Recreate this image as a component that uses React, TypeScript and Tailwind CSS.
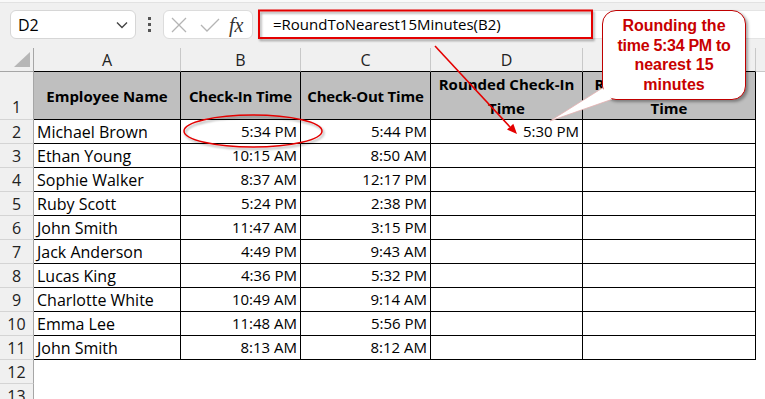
import React from "react";

const rows = [
  ["Michael Brown", "5:34 PM", "5:44 PM", "5:30 PM"],
  ["Ethan Young", "10:15 AM", "8:50 AM", ""],
  ["Sophie Walker", "8:37 AM", "12:17 PM", ""],
  ["Ruby Scott", "5:24 PM", "2:38 PM", ""],
  ["John Smith", "11:47 AM", "3:15 PM", ""],
  ["Jack Anderson", "4:49 PM", "9:43 AM", ""],
  ["Lucas King", "4:36 PM", "5:32 PM", ""],
  ["Charlotte White", "10:49 AM", "9:14 AM", ""],
  ["Emma Lee", "11:48 AM", "5:56 PM", ""],
  ["John Smith", "8:13 AM", "8:12 AM", ""],
];

const RowNum = ({ n, tall }: { n: string; tall?: boolean }) => (
  <div
    className={`w-[34px] shrink-0 box-border border-r border-b border-r-[#a6a6a6] border-b-[#d4d4d4] bg-[#f0f0f0] flex justify-center text-[16px] text-[#222] ${tall ? "items-end" : "items-center"}`}
  >
    {n}
  </div>
);

export default function App() {
  return (
    <div
      className="relative w-[765px] h-[399px] overflow-hidden bg-[#f0f0f0] text-black"
      style={{ fontFamily: '"Open Sans", "Noto Sans", sans-serif' }}
    >
      {/* top strip */}
      <div className="h-[3px] bg-[#f9f9f9] border-b border-[#e2e2e2]" />

      {/* formula bar */}
      <div className="h-[45px] flex items-start pt-[7px] pl-[10px]">
        <div className="w-[126px] h-[29px] rounded-[6px] border border-[#d6d6d6] bg-white flex items-center justify-between pl-[7px] pr-[7px]">
          <span className="text-[16px] leading-none">D2</span>
          <svg width="12" height="8" viewBox="0 0 12 8">
            <path d="M1 1.5 L6 6.5 L11 1.5" fill="none" stroke="#444" strokeWidth="1.4" />
          </svg>
        </div>
        <div className="w-[27px] h-[29px] flex flex-col items-center justify-center gap-[3px]">
          <div className="w-[3px] h-[3px] bg-[#555]" />
          <div className="w-[3px] h-[3px] bg-[#555]" />
          <div className="w-[3px] h-[3px] bg-[#555]" />
        </div>
        <div className="w-[90px] h-[29px] rounded-[6px] border border-[#dcdcdc] bg-white flex items-center pl-[6px]">
          <svg width="18" height="18" viewBox="0 0 18 18">
            <path d="M2 2 L16 16 M16 2 L2 16" stroke="#b4b4b4" strokeWidth="1.3" />
          </svg>
          <svg width="22" height="18" viewBox="0 0 22 18" className="ml-[11px]">
            <path d="M2 9 L8 15 L20 3" fill="none" stroke="#b4b4b4" strokeWidth="1.3" />
          </svg>
          <span
            className="ml-[8px] text-[20px] italic leading-none text-[#333]"
            style={{ fontFamily: '"Liberation Serif", "DejaVu Serif", serif' }}
          >
            fx
          </span>
        </div>
        <div className="ml-[5px] flex-1 h-[29px] bg-white border-y border-[#e4e4e4] flex items-center pl-[15px]">
          <span className="text-[15px]">=RoundToNearest15Minutes(B2)</span>
        </div>
      </div>

      {/* column headers */}
      <div className="flex h-[24px]">
        <div className="w-[34px] shrink-0 box-border border-r border-b border-[#a6a6a6] flex items-end justify-end pr-[3px] pb-[4px]">
          <svg width="16" height="15" viewBox="0 0 16 15">
            <polygon points="16,0 16,15 0,15" fill="#b6b6b6" />
          </svg>
        </div>
        {[
          ["A", "w-[147px]"],
          ["B", "w-[120px]"],
          ["C", "w-[130px]"],
          ["D", "w-[152px]"],
          ["E", "w-[173px]"],
        ].map(([l, w]) => (
          <div
            key={l}
            className={`${w} shrink-0 box-border border-r border-r-[#c8c8c8] border-b border-b-black flex items-center justify-center text-[16px] text-[#222]`}
          >
            {l}
          </div>
        ))}
        <div className="flex-1 border-b border-[#c8c8c8]" />
      </div>

      {/* header row */}
      <div className="flex h-[48px] bg-white">
        <RowNum n="1" tall />
        <div className="w-[147px] shrink-0 box-border border-r border-b border-black bg-[#bfbfbf] flex items-center justify-center text-[15px] font-bold pt-[2px]">
          Employee Name
        </div>
        <div className="w-[120px] shrink-0 box-border border-r border-b border-black bg-[#bfbfbf] flex items-center justify-center text-[15px] font-bold pt-[2px] tracking-[-0.2px]">
          Check-In Time
        </div>
        <div className="w-[130px] shrink-0 box-border border-r border-b border-black bg-[#bfbfbf] flex items-center justify-center text-[15px] font-bold pt-[2px] tracking-[-0.2px]">
          Check-Out Time
        </div>
        <div className="w-[152px] shrink-0 box-border border-r border-b border-black bg-[#bfbfbf] flex flex-col items-center justify-center text-[15px] font-bold leading-[24px]">
          <span>Rounded Check-In</span>
          <span>Time</span>
        </div>
        <div className="w-[173px] shrink-0 box-border border-r border-b border-black bg-[#bfbfbf] flex flex-col items-center justify-center text-[15px] font-bold leading-[24px]">
          <span>Rounded Check-Out</span>
          <span>Time</span>
        </div>
        <div className="flex-1" />
      </div>

      {/* data rows */}
      {rows.map((r, i) => (
        <div key={i} className="flex h-[24px] bg-white text-[15px]">
          <RowNum n={String(i + 2)} />
          <div className="w-[147px] shrink-0 box-border border-r border-b border-black flex items-center pl-[3px] text-[16px]">
            {r[0]}
          </div>
          <div className="w-[120px] shrink-0 box-border border-r border-b border-black flex items-center justify-end pr-[3px]">
            {r[1]}
          </div>
          <div className="w-[130px] shrink-0 box-border border-r border-b border-black flex items-center justify-end pr-[3px]">
            {r[2]}
          </div>
          <div className="w-[152px] shrink-0 box-border border-r border-b border-black flex items-center justify-end pr-[3px]">
            {r[3]}
          </div>
          <div className="w-[173px] shrink-0 box-border border-r border-b border-black" />
          <div className="flex-1" />
        </div>
      ))}
      {["12", "13"].map((n) => (
        <div key={n} className="flex h-[24px] bg-white">
          <RowNum n={n} />
          <div className="flex-1" />
        </div>
      ))}

      {/* annotations */}
      <svg className="absolute inset-0 pointer-events-none" width="765" height="399" viewBox="0 0 765 399">
        <defs>
          <filter id="sh" x="-10%" y="-10%" width="130%" height="160%">
            <feDropShadow dx="1.5" dy="2" stdDeviation="1.2" floodColor="#000" floodOpacity="0.35" />
          </filter>
        </defs>
        <rect x="259" y="10.5" width="333" height="27.5" fill="none" stroke="#e40000" strokeWidth="2" filter="url(#sh)" />
        <ellipse cx="253" cy="131" rx="69" ry="16" fill="none" stroke="#e40000" strokeWidth="1.5" filter="url(#sh)" />
        <line x1="435" y1="46" x2="510" y2="127" stroke="#e40000" strokeWidth="1.6" />
        <polygon points="517,134 507,129.6 513.3,123.8" fill="#e40000" />
      </svg>

      {/* callout */}
      <div
        className="absolute left-[602px] top-[10px] w-[144px] h-[90px] rounded-[14px] border-[1.5px] border-[#c00000] bg-white shadow-[2px_2px_3px_rgba(0,0,0,0.35)] flex flex-col items-center pt-[5px] text-[16px] font-bold leading-[19.5px] text-[#c80000]"
        style={{ fontFamily: '"Liberation Sans", Arial, sans-serif' }}
      >
        <span>Rounding the</span>
        <span className="tracking-[-0.3px]">time 5:34 PM to</span>
        <span>nearest 15</span>
        <span>minutes</span>
      </div>
      <svg className="absolute inset-0 pointer-events-none" width="765" height="399" viewBox="0 0 765 399">
        <polygon points="602.5,88 612,99.3 550,121" fill="#fff" />
        <line x1="602.5" y1="88" x2="550" y2="121" stroke="#e6b0b0" strokeWidth="0.8" />
        <line x1="612" y1="99.3" x2="550" y2="121" stroke="#e6b0b0" strokeWidth="0.8" />
      </svg>
    </div>
  );
}
